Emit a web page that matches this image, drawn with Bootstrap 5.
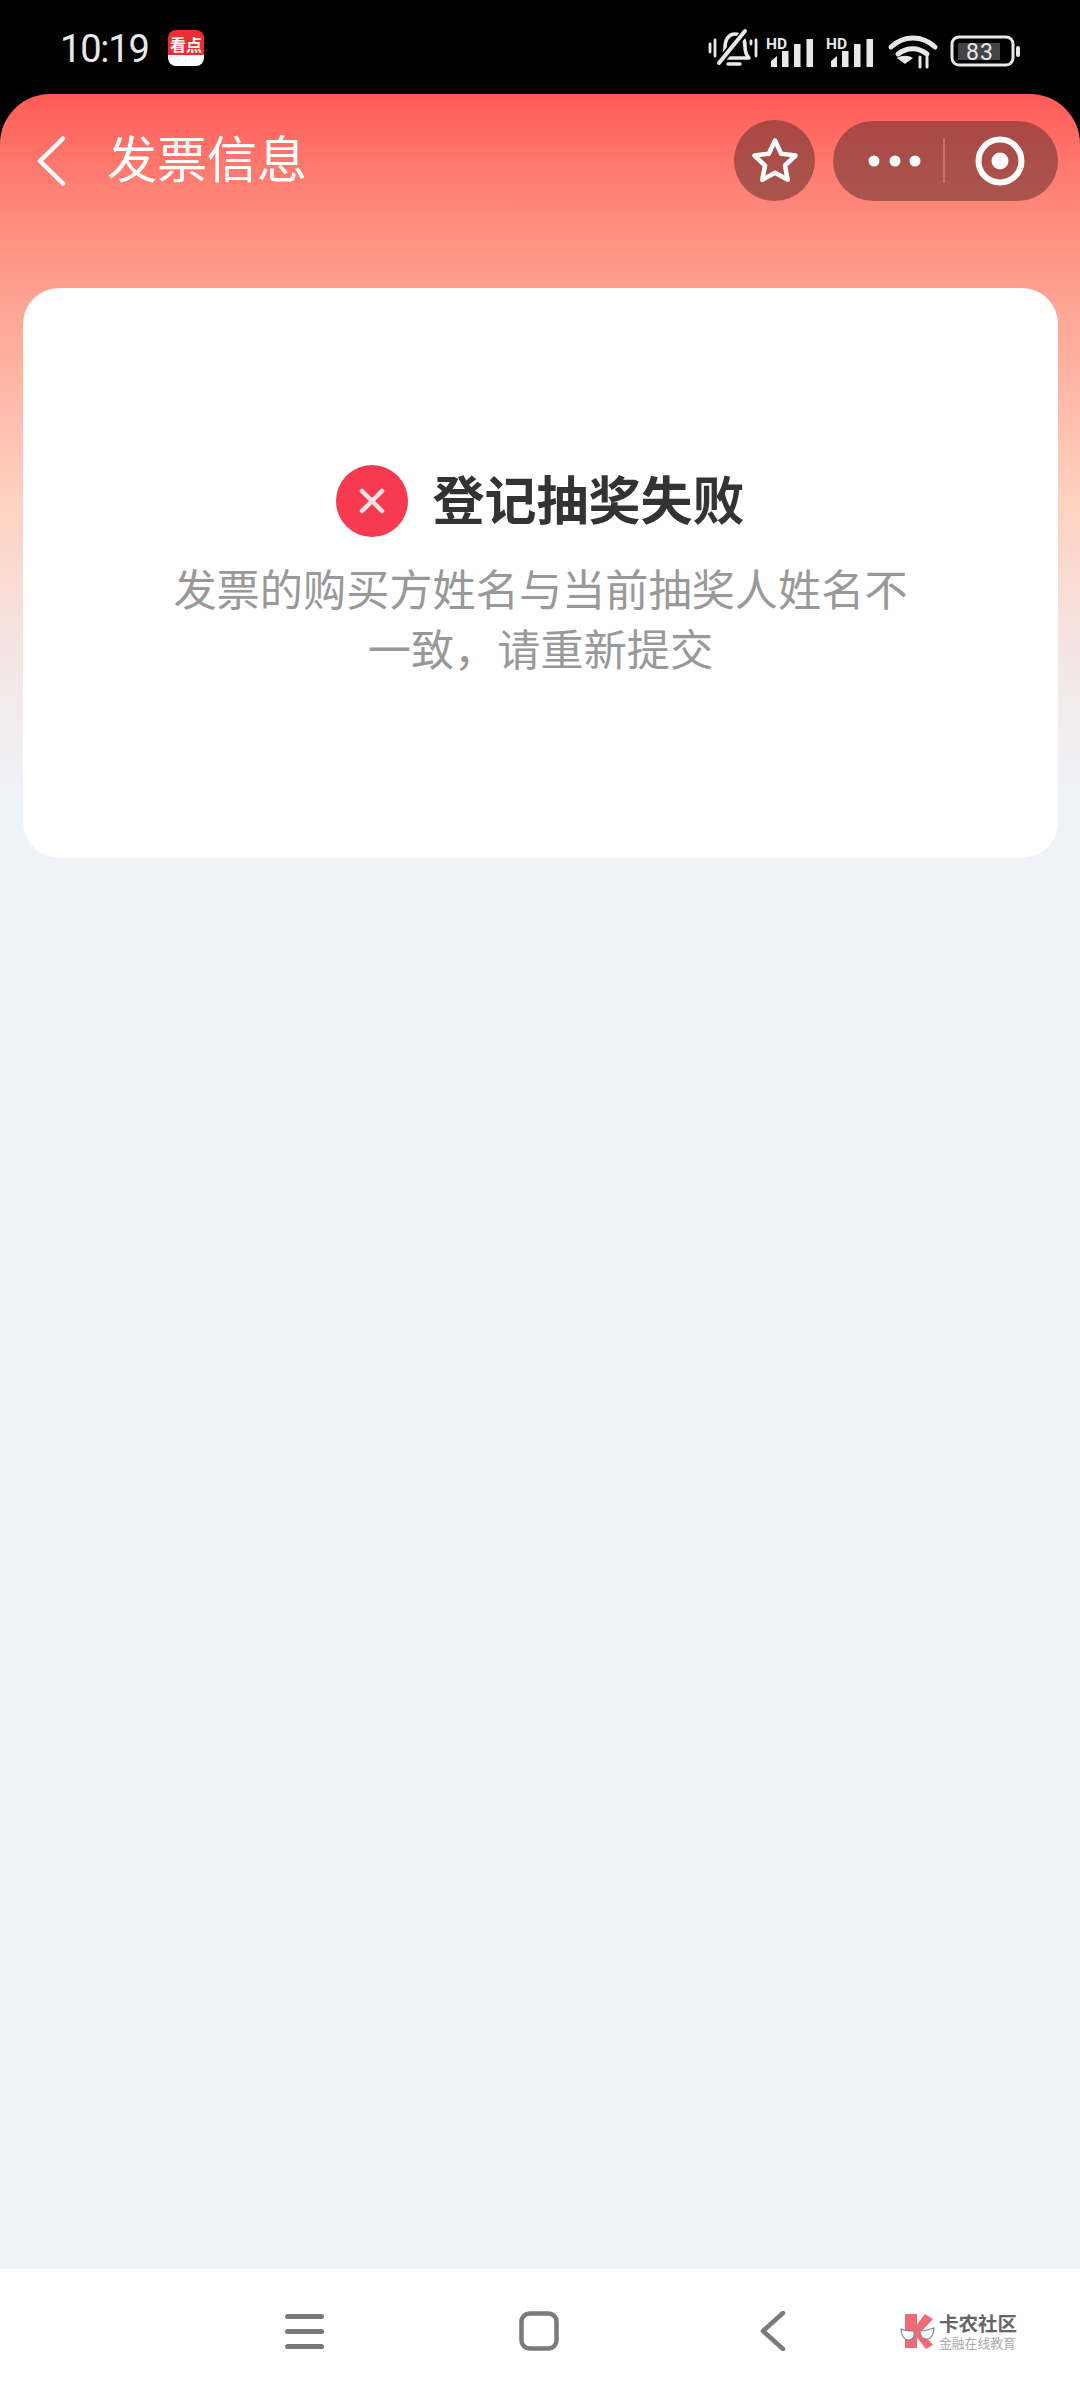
<!DOCTYPE html>
<html lang="zh">
<head>
<meta charset="utf-8">
<title>发票信息</title>
<link href="https://cdn.jsdelivr.net/npm/bootstrap@5.3.0/dist/css/bootstrap.min.css" rel="stylesheet">
<style>
html,body{margin:0;height:2400px;background:#000;overflow:hidden}
body{font-family:"Noto Sans CJK SC","Noto Sans",sans-serif}
.screen{width:1080px;height:2400px}
.status-strip{height:94px;background:#000;color:#e8e8e8;padding:0 60px}
.clock{font-family:Roboto,sans-serif;font-size:38px;line-height:1;letter-spacing:-1.2px;margin-top:3px;width:108px}
.app-tile{width:36px;height:36px;border-radius:8px;background:linear-gradient(#ee2d33 0 70%,#fff 70%);color:#fff;font-size:16px;font-weight:700;line-height:1;padding-top:6px;text-align:center;margin-top:2px}
.status-icons{margin-left:auto;margin-top:4px}
.stage{height:2175px;border-radius:50px 50px 0 0;background:linear-gradient(#ff5c56 0,#ff8377 100px,#ff9f8e 190px,#ffd0bf 400px,#f4e6e5 560px,#eff2f7 700px,#eff2f7 100%)}
.head-row{height:194px;padding:26px 22px 0 36px}
.head-inner{height:81px}
.head-title{font-size:50px;line-height:1;color:#fff;margin-left:41px;margin-top:-10px}
.glass{background:rgba(100,45,45,.55)}
.round-btn{width:81px;height:81px;border-radius:50%;margin-left:auto}
.pill-btn{width:225px;height:80px;border-radius:40px;margin-left:18px}
.result-box{margin:0 22px 0 23px;height:570px;border-radius:36px;background:#fff;padding-top:174px}
.result-title{font-size:52px;line-height:72px;font-weight:700;color:#333}
.result-title span{padding-bottom:5px}
.result-icon{width:72px;height:72px;margin-right:24px}
.result-text{width:760px;margin:18px auto 0;font-size:43.2px;line-height:60px;color:#999;text-align:center}
.nav-strip{height:131px;background:#fff}
.nav-inner{position:relative;height:131px}
.nav-glyph{position:absolute;top:42px}
.brand{position:absolute;left:900px;top:44px;height:36px}
.brand-name{font-size:19.5px;line-height:20px;font-weight:700;color:#666;margin-bottom:3px}
.brand-sub{font-size:12.8px;line-height:13px;color:#aaa}
</style>
</head>
<body>
<div class="screen d-flex flex-column">
  <div class="status-strip d-flex align-items-center">
    <span class="clock">10:19</span>
    <span class="app-tile">看点</span>
    <svg class="status-icons" width="312" height="44" viewBox="0 0 312 44" fill="none" stroke="#e8e8e8" stroke-linecap="round" stroke-linejoin="round">
      <path d="M2 17v8M7 13v16M48 13v16M43 17v-3" stroke-width="2.800"/>
      <path d="M13 31c3-2 4-5 4-10 0-9 4-14 10-14s10 4 10 12c0 5 1 9 4 12z" stroke-width="3.600"/>
      <path d="M20 37h12" stroke-width="3.400"/>
      <path d="M10 37 38 4" stroke="#000" stroke-width="8"/>
      <path d="M11 36 37 4" stroke-width="4"/>
      <g fill="#e8e8e8" stroke="none">
        <path d="M63 40v-6l6-5v11zM74 40V24h6.500v16zM86 40V17h6.500v23zM98.500 40V12h6.500v28z"/>
        <path d="M123 40v-6l6-5v11zM134 40V24h6.500v16zM146 40V17h6.500v23zM158.500 40V12h6.500v28z"/>
        <text x="58" y="22" font-family="Roboto,sans-serif" font-size="15.500" font-weight="700">HD</text>
        <text x="118" y="22" font-family="Roboto,sans-serif" font-size="15.500" font-weight="700">HD</text>
        <path d="M197 37l8-6c-5-3-11-3-16 0z"/>
        <path d="M212 30v10M219 40V30" stroke="#e8e8e8" stroke-width="3"/>
      </g>
      <g stroke-width="5">
        <path d="M183 20c13-12 31-12 44 0"/>
        <path d="M190 27c9-7 20-7 29 0"/>
      </g>
      <rect x="244" y="10" width="61" height="28" rx="7" stroke-width="3"/>
      <rect x="250" y="16" width="42" height="17" rx="1" fill="#444" stroke="none"/>
      <text x="258" y="33" font-family="Roboto,sans-serif" font-size="23" fill="#e8e8e8" stroke="none" letter-spacing="1">83</text>
      <rect x="308" y="19" width="4" height="11" rx="2" fill="#e8e8e8" stroke="none"/>
    </svg>
  </div>

  <div class="stage flex-grow-0">
    <div class="head-row">
      <div class="head-inner d-flex align-items-center">
        <svg width="30" height="50" viewBox="0 0 30 50" fill="none" stroke="#fff" stroke-width="4.500" stroke-linecap="round" stroke-linejoin="round" class="flex-shrink-0"><path d="M27 2.500 4 25l23 22.500"/></svg>
        <span class="head-title">发票信息</span>
        <div class="round-btn glass d-flex align-items-center justify-content-center">
          <svg width="48" height="48" viewBox="0 0 48 48" fill="none" stroke="#fff" stroke-width="4.500" stroke-linejoin="round"><path d="M24 3.500l6.200 13.200 14.300 1.800-10.500 10 2.700 14.300L24 35.700l-12.700 7.100 2.700-14.300-10.500-10 14.300-1.800z"/></svg>
        </div>
        <div class="pill-btn glass d-flex align-items-center">
          <svg width="225" height="80" viewBox="0 0 225 80" fill="#fff">
            <circle cx="41" cy="40" r="5.500"/><circle cx="62" cy="40" r="5.500"/><circle cx="82" cy="40" r="5.500"/>
            <rect x="110.500" y="17" width="1" height="45" fill="#d99"/>
            <circle cx="167" cy="40" r="21.500" fill="none" stroke="#fff" stroke-width="6"/><circle cx="167" cy="40" r="8.500"/>
          </svg>
        </div>
      </div>
    </div>

    <div class="result-box">
      <div class="d-flex align-items-center justify-content-center result-title">
        <svg class="result-icon" viewBox="0 0 72 72"><circle cx="36" cy="36" r="36" fill="#f73a50"/><path d="M26 26l20 20M46 26 26 46" stroke="#fbe3e6" stroke-width="4.500" stroke-linecap="round"/></svg>
        <span>登记抽奖失败</span>
      </div>
      <p class="result-text">发票的购买方姓名与当前抽奖人姓名不一致，请重新提交</p>
    </div>
  </div>

  <div class="nav-strip">
    <div class="nav-inner">
      <svg class="nav-glyph" width="39" height="40" viewBox="0 0 39 40" fill="#7a7a7a" style="left:285px"><rect y="3" width="39" height="5" rx="2.500"/><rect y="18" width="39" height="5" rx="2.500"/><rect y="33" width="39" height="5" rx="2.500"/></svg>
      <svg class="nav-glyph" width="40" height="40" viewBox="0 0 40 40" fill="none" stroke="#7a7a7a" stroke-width="4.500" style="left:519px"><rect x="2.500" y="2.500" width="35" height="35" rx="8"/></svg>
      <svg class="nav-glyph" width="26" height="40" viewBox="0 0 26 40" fill="none" stroke="#7a7a7a" stroke-width="4.500" stroke-linecap="round" stroke-linejoin="round" style="left:760px"><path d="M23 2 3 20l20 18"/></svg>
      <div class="brand d-flex align-items-center gap-1">
        <svg width="35" height="36" viewBox="0 0 35 36">
          <path d="M5 1h12v34H5z" fill="#ee6b78"/>
          <path d="M15 14 25 1l8 5-12 13 12 13-7 4-11-14z" fill="#ee6b78"/>
          <path d="M1 16c4 2 8 2 13 2 1 5-1 9-5 9-5 0-8-5-8-11zM20 18c5 0 9-1 14-3 0 6-3 11-7 11s-7-3-7-8z" fill="#fff" stroke="#888" stroke-width="1.200"/>
        </svg>
        <div>
          <div class="brand-name">卡农社区</div>
          <div class="brand-sub">金融在线教育</div>
        </div>
      </div>
    </div>
  </div>
</div>
</body>
</html>
